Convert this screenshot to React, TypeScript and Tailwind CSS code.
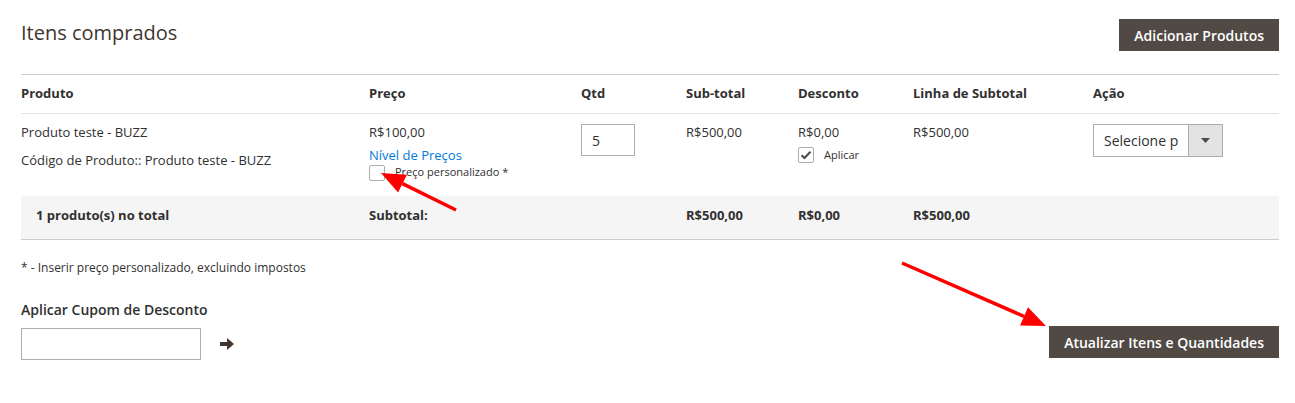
const cols = "grid grid-cols-[348px_212px_105px_112px_115px_180px_1fr]";

function Arrow({ x1, y1, x2, y2 }: { x1: number; y1: number; x2: number; y2: number }) {
  const a = Math.atan2(y2 - y1, x2 - x1);
  const len = 24;
  const w = 10;
  const bx = x2 - len * Math.cos(a);
  const by = y2 - len * Math.sin(a);
  const px = -Math.sin(a) * w;
  const py = Math.cos(a) * w;
  return (
    <g>
      <line x1={x1} y1={y1} x2={bx} y2={by} stroke="#f00" strokeWidth={3.5} />
      <polygon points={`${x2},${y2} ${bx + px},${by + py} ${bx - px},${by - py}`} fill="#f00" />
    </g>
  );
}

export default function App() {
  return (
    <div className="relative w-[1295px] h-[403px] bg-white pl-[21px] pr-[16px] pt-[19px] text-[13px] text-[#303030] font-['Open_Sans',sans-serif]">
      {/* Header */}
      <div className="flex items-start justify-between h-[55px]">
        <h2 className="text-[20px] leading-[28px] text-[#41362f] font-normal">Itens comprados</h2>
        <button className="h-8 px-[15px] bg-[#514943] text-white text-[14px] font-semibold">
          Adicionar Produtos
        </button>
      </div>

      {/* Table */}
      <div className="border-t border-[#cccccc]">
        <div className={`${cols} h-[39px] items-center border-b border-[#e3e3e3] font-bold`}>
          <div>Produto</div>
          <div>Preço</div>
          <div>Qtd</div>
          <div>Sub-total</div>
          <div>Desconto</div>
          <div>Linha de Subtotal</div>
          <div>Ação</div>
        </div>

        <div className={`${cols} h-[82px] pt-[9px]`}>
          <div className="leading-[18px]">
            <div>Produto teste - BUZZ</div>
            <div className="mt-[10px]">Código de Produto:: Produto teste - BUZZ</div>
          </div>
          <div className="leading-[18px]">
            <div>R$100,00</div>
            <div className="text-[13px] text-[#007bdb] mt-[5px] leading-[18px]">Nível de Preços</div>
            <label className="flex items-center gap-[10px] mt-[1px]">
              <span className="w-4 h-4 border border-[#adadad] rounded-[2px] bg-white" />
              <span className="text-[11px] leading-[16px] mt-[-3px]">Preço personalizado *</span>
            </label>
          </div>
          <div className="pt-[1px]">
            <div className="w-[54px] h-8 border border-[#adadad] flex items-center pl-[10px] text-[14px]">5</div>
          </div>
          <div className="leading-[18px]">R$500,00</div>
          <div className="leading-[18px]">
            <div>R$0,00</div>
            <label className="flex items-center gap-[10px] mt-[6px]">
              <span className="w-4 h-4 border border-[#adadad] rounded-[2px] bg-white flex items-center justify-center">
                <svg width="12" height="10" viewBox="0 0 12 10">
                  <path d="M1.5 5.2 L4.5 8 L10.5 1.8" fill="none" stroke="#514943" strokeWidth="2" />
                </svg>
              </span>
              <span className="text-[11px] leading-[16px]">Aplicar</span>
            </label>
          </div>
          <div className="leading-[18px]">R$500,00</div>
          <div className="pt-[1px]">
            <div className="flex w-[130px] h-[33px] border border-[#adadad]">
              <div className="flex-1 flex items-center pl-[10px] text-[14px] overflow-hidden whitespace-nowrap">Selecione p</div>
              <div className="w-[34px] bg-[#e3e3e3] border-l border-[#adadad] flex items-center justify-center">
                <svg width="9" height="5" viewBox="0 0 9 5">
                  <path d="M0 0 H9 L4.5 5 Z" fill="#514943" />
                </svg>
              </div>
            </div>
          </div>
        </div>

        <div className={`${cols} h-[44px] pt-[10px] leading-[18px] bg-[#f5f5f5] border-b border-[#cccccc] font-bold`}>
          <div className="pl-[15px]">1 produto(s) no total</div>
          <div>Subtotal:</div>
          <div />
          <div>R$500,00</div>
          <div>R$0,00</div>
          <div>R$500,00</div>
          <div />
        </div>
      </div>

      <p className="text-[12px] mt-[19px] leading-[17px]">* - Inserir preço personalizado, excluindo impostos</p>

      <div className="flex items-end justify-between mt-[24px]">
        <div>
          <div className="text-[14px] font-semibold leading-[20px]">Aplicar Cupom de Desconto</div>
          <div className="flex items-center mt-[8px]">
            <div className="w-[180px] h-8 border border-[#adadad]" />
            <svg className="ml-[19px]" width="14" height="12" viewBox="0 0 14 12">
              <path d="M0 4 H7 V0 L14 6 L7 12 V8 H0 Z" fill="#41362f" />
            </svg>
          </div>
        </div>
        <button className="h-8 px-[15px] bg-[#514943] text-white text-[14px] font-semibold mb-[2px]">
          Atualizar Itens e Quantidades
        </button>
      </div>

      {/* Annotation arrows */}
      <svg className="absolute inset-0 pointer-events-none" width="1295" height="403">
        <Arrow x1={456} y1={210} x2={381} y2={173} />
        <Arrow x1={902} y1={263} x2={1046} y2={326} />
      </svg>
    </div>
  );
}
